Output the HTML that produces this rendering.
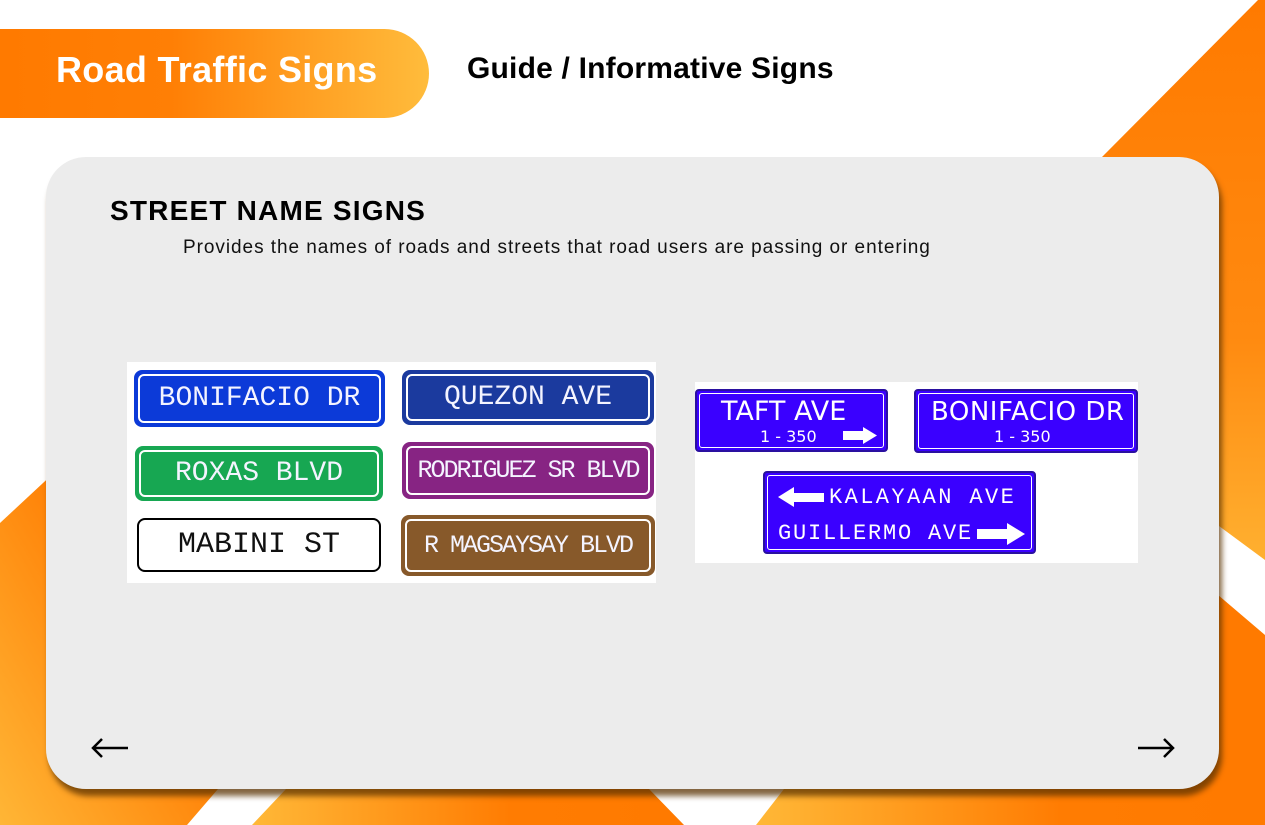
<!DOCTYPE html>
<html><head><meta charset="utf-8"><style>
*{margin:0;padding:0;box-sizing:border-box}
body{width:1265px;height:825px;position:relative;overflow:hidden;background:#fff;font-family:"Liberation Sans",sans-serif}
.bg{position:absolute;left:0;top:0}
.pill{position:absolute;left:0;top:29px;width:429px;height:89px;border-radius:0 45px 45px 0;background:linear-gradient(90deg,#ff7a00 0%,#ff7f05 40%,#ffbc3c 100%)}
.pill span{position:absolute;left:56px;top:20px;color:#fff;font-weight:bold;font-size:36px;letter-spacing:0.3px}
.sub{position:absolute;left:467px;top:52px;font-weight:bold;font-size:30px;color:#000;letter-spacing:0.2px}
.card{position:absolute;left:46px;top:157px;width:1173px;height:632px;background:#ececec;border-radius:40px;box-shadow:3px 7px 6px rgba(90,50,0,.75)}
.h{position:absolute;left:110px;top:195px;font-weight:bold;font-size:28px;color:#000;letter-spacing:1.2px}
.p{position:absolute;left:183px;top:237px;font-size:19px;color:#111;letter-spacing:0.95px}
.box{position:absolute;background:#fff}
.s{position:absolute;border-radius:8px;border:2px solid;display:flex;align-items:center;justify-content:center;font-family:"Liberation Mono",monospace;color:#f4f4ff;white-space:nowrap}
.s::after{content:"";position:absolute;inset:2px;border:2px solid #fff;border-radius:6px}
.g{position:absolute;background:#3a00ff;border:2px solid #2a10a0;border-radius:4px;color:#fff;font-family:"DejaVu Sans",sans-serif}
.g::after{content:"";position:absolute;inset:2px;border:1.5px solid #fff;border-radius:3px}
.arr{position:absolute}
</style></head><body>
<svg class="bg" width="1265" height="825">
<defs>
<linearGradient id="o1" x1="0" y1="1" x2="1" y2="0"><stop offset="0" stop-color="#ffb636"/><stop offset="0.6" stop-color="#ff7c02"/><stop offset="1" stop-color="#ff7a00"/></linearGradient>
<linearGradient id="o2" x1="0" y1="0" x2="1" y2="0"><stop offset="0" stop-color="#ffb837"/><stop offset="0.6" stop-color="#ff7c02"/><stop offset="1" stop-color="#ff7a00"/></linearGradient>
<linearGradient id="o3" x1="0" y1="0" x2="0" y2="1"><stop offset="0" stop-color="#ff7a00"/><stop offset="0.6" stop-color="#ff8a10"/><stop offset="1" stop-color="#ffb030"/></linearGradient>
</defs>
<polygon points="1258,0 1265,0 1265,560 1150,475 1000,300 1102,157" fill="url(#o3)"/>
<polygon points="1150,537 1265,635 1265,825 1150,825" fill="#ff7a00"/>
<polygon points="0,523 100,430 230,430 218,789 187,825 0,825" fill="url(#o1)"/>
<polygon points="286,789 290,700 640,700 649,789 684,825 252,825" fill="url(#o2)"/>
<polygon points="784,789 790,700 1265,700 1265,825 756,825" fill="url(#o2)"/>
</svg>
<div class="pill"><span>Road Traffic Signs</span></div>
<div class="sub">Guide / Informative Signs</div>
<div class="card"></div>
<div class="h">STREET NAME SIGNS</div>
<div class="p">Provides the names of roads and streets that road users are passing or entering</div>

<div class="box" style="left:127px;top:362px;width:529px;height:221px"></div>
<div class="s" style="left:134px;top:370px;width:251px;height:57px;background:#0c3ad8;border-color:#0c3ad8;font-size:28px">BONIFACIO DR</div>
<div class="s" style="left:402px;top:370px;width:252px;height:55px;background:#1b3a9e;border-color:#1b3a9e;font-size:28px">QUEZON AVE</div>
<div class="s" style="left:135px;top:446px;width:248px;height:55px;background:#17a752;border-color:#17a752;font-size:28px">ROXAS BLVD</div>
<div class="s" style="left:402px;top:442px;width:252px;height:57px;background:#872483;border-color:#872483;font-size:25px;letter-spacing:-2px">RODRIGUEZ SR BLVD</div>
<div class="s" style="left:137px;top:518px;width:244px;height:54px;background:#fff;border-color:#000;color:#111;font-size:30px">MABINI ST</div>
<div class="s" style="left:401px;top:515px;width:254px;height:61px;background:#87592a;border-color:#87592a;font-size:25px;letter-spacing:-2px">R MAGSAYSAY BLVD</div>

<div class="box" style="left:695px;top:382px;width:443px;height:181px"></div>
<div class="g" style="left:695px;top:389px;width:193px;height:63px">
<div style="position:absolute;left:24px;top:6px;font-size:27px;line-height:30px">TAFT AVE</div>
<div style="position:absolute;left:63px;top:37px;font-size:16px;line-height:18px">1 - 350</div>
<svg class="arr" style="left:146px;top:36px" width="36" height="17"><polygon points="0,4 20,4 20,0 34,8.5 20,17 20,13 0,13" fill="#fff"/></svg>
</div>
<div class="g" style="left:914px;top:389px;width:224px;height:64px">
<div style="position:absolute;left:15px;top:6px;font-size:26px;line-height:30px;letter-spacing:0.5px">BONIFACIO DR</div>
<div style="position:absolute;left:78px;top:37px;font-size:16px;line-height:18px">1 - 350</div>
</div>
<div class="g" style="left:763px;top:471px;width:273px;height:83px;font-family:'Liberation Mono',monospace">
<svg class="arr" style="left:13px;top:14px" width="48" height="20"><polygon points="0,10 16,0 16,6 46,6 46,15 16,15 16,20" fill="#fff"/></svg>
<div style="position:absolute;left:64px;top:12px;font-size:22px;letter-spacing:2.4px">KALAYAAN AVE</div>
<div style="position:absolute;left:13px;top:48px;font-size:22px;letter-spacing:1.8px">GUILLERMO AVE</div>
<svg class="arr" style="left:212px;top:50px" width="50" height="22"><polygon points="0,6 30,6 30,0 48,11 30,22 30,16 0,16" fill="#fff"/></svg>
</div>

<svg style="position:absolute;left:90px;top:737px" width="40" height="22"><path d="M38 11H3M12 2L3 11L12 20" stroke="#000" stroke-width="2.5" fill="none"/></svg>
<svg style="position:absolute;left:1137px;top:737px" width="40" height="22"><path d="M1 11H36M27 2L36 11L27 20" stroke="#000" stroke-width="2.5" fill="none"/></svg>
</body></html>
